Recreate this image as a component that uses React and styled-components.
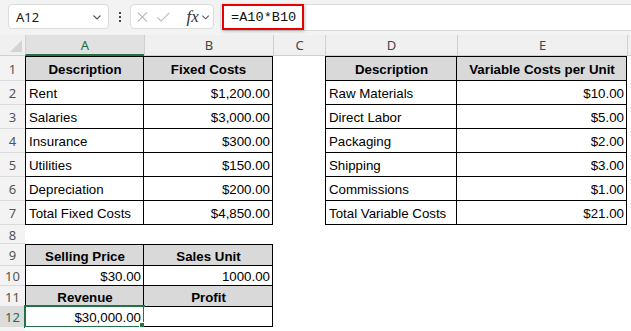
import React from 'react';
import styled, { createGlobalStyle } from 'styled-components';

const GlobalStyle = createGlobalStyle`
  body {
    margin: 0;
    background: #ffffff;
    overflow: hidden;
    font-family: "Liberation Sans", Arial, sans-serif;
  }
`;

const Toolbar = styled.div`
  display: flex;
  align-items: flex-start;
  height: 35px;
  box-sizing: border-box;
  padding: 4px 0 0 8px;
  background: #f3f3f3;
`;

const NameBox = styled.div`
  display: flex;
  align-items: center;
  justify-content: space-between;
  width: 101px;
  height: 25px;
  box-sizing: border-box;
  padding: 0 6px 0 7px;
  background: #ffffff;
  border: 1px solid #dcdcdc;
  border-radius: 4px;
  font-family: "Noto Sans", "Liberation Sans", sans-serif;
  font-size: 13px;
  color: #1a1a1a;
`;

const Dots = styled.div`
  display: flex;
  flex-direction: column;
  gap: 2px;
  margin: 8px 9px 0 10px;
  span {
    width: 2px;
    height: 2px;
    background: #444;
  }
`;

const FxGroup = styled.div`
  display: flex;
  align-items: center;
  width: 84px;
  height: 25px;
  box-sizing: border-box;
  padding: 0 3px 0 5px;
  background: #ffffff;
  border: 1px solid #dcdcdc;
  border-radius: 4px;
  gap: 7px;
`;

const Fx = styled.span`
  font-family: "Liberation Serif", serif;
  font-style: italic;
  font-size: 17px;
  color: #333;
  margin-left: 9px;
  margin-right: -5px;
`;

const FormulaInput = styled.div`
  flex: 1;
  display: flex;
  align-items: center;
  height: 25px;
  margin-left: 6px;
  background: #ffffff;
  border: 1px solid #dcdcdc;
  border-right: none;
  border-radius: 4px 0 0 4px;
  position: relative;
`;

const Highlight = styled.div`
  position: absolute;
  left: 1px;
  top: -1px;
  width: 82px;
  height: 26px;
  box-sizing: border-box;
  border: 2px solid #e60000;
  box-shadow: 1px 1px 3px rgba(0, 0, 0, 0.25);
`;

const Formula = styled.span`
  font-family: "Liberation Mono", monospace;
  font-size: 13.6px;
  color: #111;
  margin-left: 10px;
`;

const Sheet = styled.div`
  display: grid;
  grid-template-columns: 25px 119px 129px 52px 132px 170px 1fr;
  grid-template-rows: 21px 25px repeat(6, 24px) 19px 22px 20px 21px 20px 20px;
`;

const Corner = styled.div`
  background: #f0f0f0;
  border-bottom: 1px solid #d0d0d0;
  position: relative;
  &::after {
    content: '';
    position: absolute;
    right: 3px;
    bottom: 3px;
    border-style: solid;
    border-width: 0 0 12px 12px;
    border-color: transparent transparent #d4d4d4 transparent;
  }
`;

const ColHead = styled.div`
  display: flex;
  align-items: center;
  justify-content: center;
  box-sizing: border-box;
  font-family: "Noto Sans", "Liberation Sans", sans-serif;
  font-size: 13px;
  color: ${(p) => (p.$active ? '#1e6b3f' : '#444')};
  background: ${(p) => (p.$active ? '#e1e1e1' : '#f0f0f0')};
  border-left: 1px solid #d0d0d0;
  border-bottom: ${(p) => (p.$active ? '2px solid #217346' : '1px solid #d0d0d0')};
`;

const RowHead = styled.div`
  display: flex;
  align-items: center;
  justify-content: center;
  box-sizing: border-box;
  font-family: "Noto Sans", "Liberation Sans", sans-serif;
  font-size: 13px;
  color: ${(p) => (p.$active ? '#2a6b45' : '#555')};
  background: ${(p) => (p.$active ? '#dcdcdc' : '#f3f3f3')};
  border-bottom: 1px solid #dadada;
  padding-top: 1px;
`;

const Cell = styled.div`
  display: flex;
  align-items: center;
  justify-content: ${(p) => (p.$align === 'right' ? 'flex-end' : p.$align === 'center' ? 'center' : 'flex-start')};
  box-sizing: border-box;
  padding: 2px 2px 0 3px;
  font-size: 13.3px;
  font-weight: ${(p) => (p.$bold ? 700 : 400)};
  color: #000;
  white-space: nowrap;
  position: relative;
  background: ${(p) => (p.$head ? '#d9d9d9' : '#ffffff')};
  border-right: ${(p) => (p.$box ? '1px solid #000' : 'none')};
  border-bottom: ${(p) => (p.$box ? '1px solid #000' : 'none')};
  border-left: ${(p) => (p.$left ? '1px solid #000' : 'none')};
  border-top: ${(p) => (p.$top ? '1px solid #000' : 'none')};
`;

const Selection = styled.div`
  position: absolute;
  left: -2px;
  top: -2px;
  right: -2px;
  bottom: -2px;
  border: 2px solid #217346;
  pointer-events: none;
  &::after {
    content: '';
    position: absolute;
    right: -4px;
    bottom: -4px;
    width: 6px;
    height: 6px;
    background: #217346;
    border: 1px solid #fff;
  }
`;

const Chevron = ({ size = 10 }) => (
  <svg width={size} height={size} viewBox="0 0 10 10" fill="none" stroke="#555" strokeWidth="1.1">
    <path d="M1.5 3.5 L5 7 L8.5 3.5" />
  </svg>
);

const CrossIcon = () => (
  <svg width="14" height="14" viewBox="0 0 14 14" fill="none" stroke="#b4b4b4" strokeWidth="1.1">
    <path d="M2 2 L12 12 M12 2 L2 12" />
  </svg>
);

const CheckIcon = () => (
  <svg width="16" height="14" viewBox="0 0 16 14" fill="none" stroke="#b4b4b4" strokeWidth="1.1">
    <path d="M1.5 7.5 L5.5 11.5 L14.5 2.5" />
  </svg>
);

const columns = ['A', 'B', 'C', 'D', 'E', ''];

const fixed = [
  ['Rent', '$1,200.00'],
  ['Salaries', '$3,000.00'],
  ['Insurance', '$300.00'],
  ['Utilities', '$150.00'],
  ['Depreciation', '$200.00'],
  ['Total Fixed Costs', '$4,850.00'],
];

const variable = [
  ['Raw Materials', '$10.00'],
  ['Direct Labor', '$5.00'],
  ['Packaging', '$2.00'],
  ['Shipping', '$3.00'],
  ['Commissions', '$1.00'],
  ['Total Variable Costs', '$21.00'],
];

const Empty = () => <Cell />;

const App = () => {
  const rows = [];

  // row 1: table headings
  rows.push(
    <React.Fragment key="r1">
      <RowHead>1</RowHead>
      <Cell $box $left $top $head $bold $align="center">Description</Cell>
      <Cell $box $top $head $bold $align="center">Fixed Costs</Cell>
      <Empty />
      <Cell $box $left $top $head $bold $align="center">Description</Cell>
      <Cell $box $top $head $bold $align="center">Variable Costs per Unit</Cell>
      <Empty />
    </React.Fragment>
  );

  fixed.forEach((item, i) => {
    rows.push(
      <React.Fragment key={`r${i + 2}`}>
        <RowHead>{i + 2}</RowHead>
        <Cell $box $left>{item[0]}</Cell>
        <Cell $box $align="right">{item[1]}</Cell>
        <Empty />
        <Cell $box $left>{variable[i][0]}</Cell>
        <Cell $box $align="right">{variable[i][1]}</Cell>
        <Empty />
      </React.Fragment>
    );
  });

  return (
    <>
      <GlobalStyle />
      <Toolbar>
        <NameBox>
          <span>A12</span>
          <Chevron />
        </NameBox>
        <Dots>
          <span />
          <span />
          <span />
        </Dots>
        <FxGroup>
          <CrossIcon />
          <CheckIcon />
          <Fx>fx</Fx>
          <Chevron />
        </FxGroup>
        <FormulaInput>
          <Highlight />
          <Formula>=A10*B10</Formula>
        </FormulaInput>
      </Toolbar>
      <Sheet>
        <Corner />
        {columns.map((c) => (
          <ColHead key={c || 'F'} $active={c === 'A'}>{c}</ColHead>
        ))}
        {rows}

        <RowHead>8</RowHead>
        <Empty /><Empty /><Empty /><Empty /><Empty /><Empty />

        <RowHead>9</RowHead>
        <Cell $box $left $top $head $bold $align="center">Selling Price</Cell>
        <Cell $box $top $head $bold $align="center">Sales Unit</Cell>
        <Empty /><Empty /><Empty /><Empty />

        <RowHead>10</RowHead>
        <Cell $box $left $align="right">$30.00</Cell>
        <Cell $box $align="right">1000.00</Cell>
        <Empty /><Empty /><Empty /><Empty />

        <RowHead>11</RowHead>
        <Cell $box $left $head $bold $align="center">Revenue</Cell>
        <Cell $box $head $bold $align="center">Profit</Cell>
        <Empty /><Empty /><Empty /><Empty />

        <RowHead $active>12</RowHead>
        <Cell $box $left $align="right">
          $30,000.00
          <Selection />
        </Cell>
        <Cell $box />
        <Empty /><Empty /><Empty /><Empty />

        <RowHead />
        <Empty /><Empty /><Empty /><Empty /><Empty /><Empty />
      </Sheet>
    </>
  );
};

export default App;
